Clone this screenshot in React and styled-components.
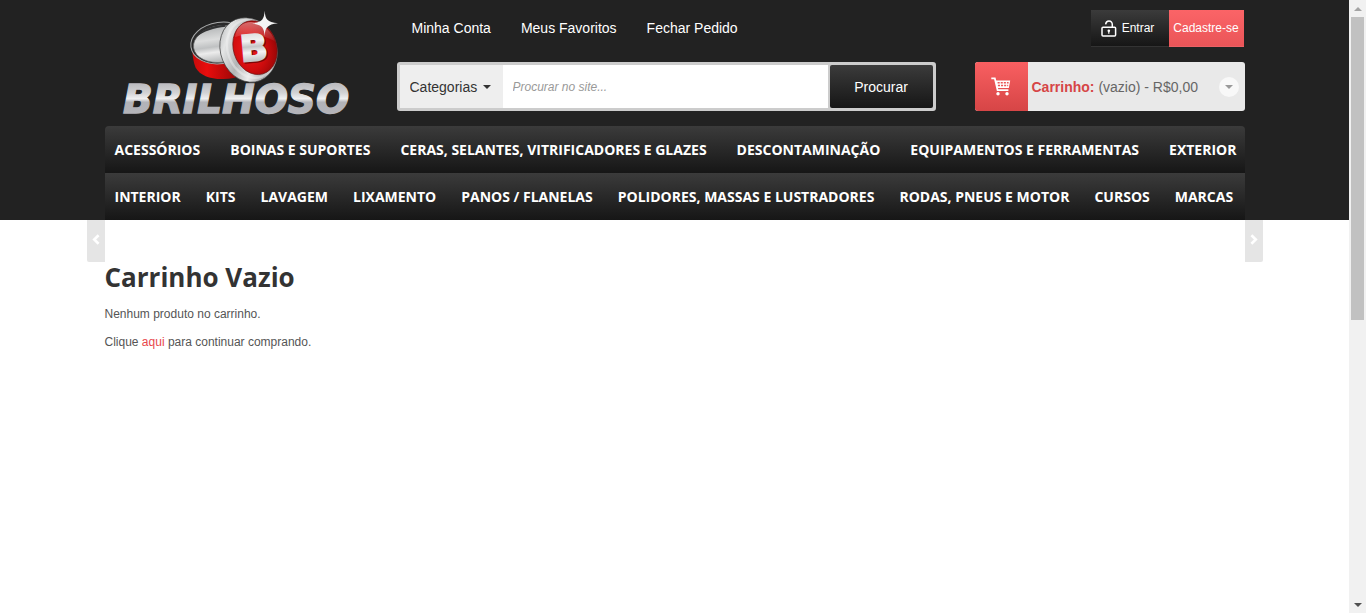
import React from "react";
import styled, { createGlobalStyle } from "styled-components";

const GlobalStyle = createGlobalStyle`
  *, *::before, *::after { box-sizing: border-box; }
  body {
    margin: 0;
    background: #fff;
    color: #555;
    font: 12px/18px "Liberation Sans", Arial, sans-serif;
  }
  a { text-decoration: none; }
  ul { list-style: none; margin: 0; padding: 0; }
`;

const headingFont = `"Open Sans", sans-serif`;
const darkGradient = "linear-gradient(#3b3b3b, #161616)";

const Screen = styled.div`
  display: flex;
  align-items: flex-start;
`;

const Page = styled.div`
  flex: 1;
  min-width: 0;
`;

const Container = styled.div`
  position: relative;
  max-width: 1140px;
  margin: 0 auto;
`;

const Header = styled.header`
  background: #222;
`;

const Masthead = styled.div`
  display: grid;
  grid-template-columns: 262px minmax(0, 1fr) 270px;
  column-gap: 30px;
  padding-top: 8px;
`;

const LogoLink = styled.a`
  display: block;
  height: 118px;
  svg { display: block; }
`;

const Middle = styled.div`
  display: flex;
  flex-direction: column;
  padding: 2px 9px 15px 0;
  justify-content: space-between;
`;

const TopLinks = styled.ul`
  display: flex;
  gap: 30px;
  padding: 0 15px;
  a {
    color: #fff;
    font-size: 14px;
    line-height: 36px;
  }
`;

const SearchForm = styled.form`
  display: flex;
  height: 49px;
  border: 3px solid #ccc;
  border-radius: 3px;
  background: #ccc;
`;

const CategoryField = styled.label`
  display: grid;
  align-items: center;
  width: 103px;
  background: #eee;
  > * { grid-area: 1 / 1; }
  svg {
    justify-self: end;
    margin-right: 12px;
    pointer-events: none;
  }
`;

const CategorySelect = styled.select`
  appearance: none;
  width: 100%;
  height: 100%;
  padding: 0 10px;
  border: 0;
  background: transparent;
  color: #333;
  font: 14px "Liberation Sans", Arial, sans-serif;
`;

const SearchInput = styled.input`
  flex: 1;
  min-width: 0;
  padding: 0 10px;
  border: 0;
  border-radius: 0;
  background: #fff;
  font: italic 12px "Liberation Sans", Arial, sans-serif;
  &::placeholder { color: #999; opacity: 1; }
`;

const SearchButton = styled.button`
  width: 103px;
  margin-left: 2px;
  padding: 0;
  border: 0;
  border-radius: 2px;
  background: ${darkGradient};
  color: #fff;
  font: 14px "Liberation Sans", Arial, sans-serif;
`;

const Account = styled.div`
  display: flex;
  flex-direction: column;
  align-items: stretch;
  justify-content: space-between;
  padding: 2px 0 15px;
`;

const AccountLinks = styled.div`
  display: flex;
  justify-content: flex-end;
  padding-right: 1px;
`;

const AccountLink = styled.a`
  display: flex;
  align-items: center;
  justify-content: center;
  gap: 5px;
  width: ${(p) => (p.$primary ? 75 : 78)}px;
  height: 37px;
  padding-right: ${(p) => (p.$primary ? 0 : 4)}px;
  border-bottom: 1px solid ${(p) => (p.$primary ? "#ec6165" : "#333")};
  background: ${(p) =>
    p.$primary ? "linear-gradient(#fb6467, #ea5558)" : darkGradient};
  color: #fff;
`;

const CartBar = styled.div`
  display: flex;
  align-items: center;
  height: 49px;
  border-radius: 3px;
  overflow: hidden;
  background: #e9e9e9;
  color: #666;
  font-size: 14px;
`;

const CartIconBox = styled.a`
  display: flex;
  align-items: center;
  justify-content: center;
  width: 53px;
  height: 100%;
  background: linear-gradient(#f95f61, #d64546);
`;

const CartText = styled.span`
  flex: 1;
  padding-left: 4px;
  strong { color: #d64546; }
`;

const CartToggle = styled.button`
  display: flex;
  align-items: center;
  justify-content: center;
  width: 20px;
  height: 20px;
  margin-right: 6px;
  padding: 0;
  border: 0;
  border-radius: 50%;
  background: #f8f8f8;
`;

const Nav = styled.nav`
  border-radius: 4px 4px 0 0;
  overflow: hidden;
`;

const NavRow = styled.ul`
  display: flex;
  gap: ${(p) => p.$gap}px;
  height: 47px;
  padding: 0 10px;
  background: ${darkGradient};
  a {
    color: #fff;
    font: 700 14px/47px ${headingFont};
    white-space: nowrap;
  }
`;

const SideArrow = styled.button`
  position: absolute;
  top: 0;
  ${(p) => (p.$side === "left" ? "right: 100%;" : "left: 100%;")}
  display: flex;
  align-items: center;
  justify-content: center;
  width: 18px;
  height: 42px;
  padding: 0 0 3px;
  border: 0;
  border-radius: ${(p) => (p.$side === "left" ? "0 0 0 2px" : "0 0 2px 0")};
  background: #e5e5e5;
`;

const Content = styled.main`
  padding: 40px 0;
  p { margin: 0 0 10px; }
  a { color: #e8474b; }
`;

const Title = styled.h1`
  margin: 0 0 10px;
  color: #333;
  font: 700 26px/35px ${headingFont};
`;

const Scrollbar = styled.div`
  position: sticky;
  top: 0;
  display: flex;
  flex-direction: column;
  width: 17px;
  height: 100vh;
  padding: 0 2px;
  background: #f1f1f1;
`;

const ScrollEnd = styled.div`
  display: flex;
  align-items: center;
  justify-content: center;
  height: 17px;
`;

const ScrollPart = styled.div`
  flex: ${(p) => p.$share} 0 0;
  background: ${(p) => (p.$thumb ? "#c1c1c1" : "transparent")};
`;

const Caret = ({ width = 8, height = 4, color = "#333", up }) => (
  <svg width={width} height={height} viewBox="0 0 8 4" aria-hidden="true">
    <path d={up ? "M0 4L4 0L8 4Z" : "M0 0H8L4 4Z"} fill={color} />
  </svg>
);

const Chevron = ({ side }) => (
  <svg width="8" height="11" viewBox="0 0 8 11" aria-hidden="true">
    <path
      d={side === "left" ? "M6.6 1.2L2.2 5.5L6.6 9.8" : "M1.4 1.2L5.8 5.5L1.4 9.8"}
      fill="none"
      stroke="#fff"
      strokeWidth="2.6"
    />
  </svg>
);

const LockIcon = () => (
  <svg width="16" height="17" viewBox="0 0 16 17" fill="none" stroke="#fff" aria-hidden="true">
    <rect x="1" y="7.2" width="13.6" height="8.8" rx="1" strokeWidth="1.5" />
    <path d="M4.6 4.4C4.9 2.2 6.1 1 7.9 1C10 1 11.3 2.4 11.3 4.6V7" strokeWidth="1.5" />
    <circle cx="7.8" cy="10.8" r="1.3" fill="#fff" stroke="none" />
    <path d="M7.8 11V13.8" strokeWidth="1.2" />
  </svg>
);

const CartIcon = () => (
  <svg width="20" height="19" viewBox="0 0 20 19" fill="none" stroke="#fff" aria-hidden="true">
    <path d="M0.3 1.4H3.8L6.6 13.2H17.4" strokeWidth="1.8" />
    <path d="M4.4 3.4H19.2L17.8 11H6.2Z" fill="#fff" stroke="none" />
    <path d="M6.6 5.7H17.6M6.9 8.5H17.2" stroke="#ea5759" strokeWidth="1.5" strokeDasharray="2.1 1" />
    <circle cx="7" cy="16.7" r="1.7" fill="#fff" stroke="none" />
    <circle cx="16" cy="16.7" r="1.7" fill="#fff" stroke="none" />
  </svg>
);

const Logo = () => (
  <svg width="262" height="118" viewBox="30 24 786 354" role="img" aria-label="Brilhoso">
    <defs>
      <linearGradient id="word" gradientUnits="userSpaceOnUse" x1="0" y1="252" x2="0" y2="340">
        <stop offset="0" stopColor="#bcbcc0" />
        <stop offset="0.3" stopColor="#d2d2d4" />
        <stop offset="0.5" stopColor="#f0f0f1" />
        <stop offset="0.62" stopColor="#b2b3b8" />
        <stop offset="1" stopColor="#b4b4b9" />
      </linearGradient>
      <linearGradient id="inside" x1="0" y1="0" x2="0" y2="1">
        <stop offset="0" stopColor="#b4b6b7" />
        <stop offset="0.35" stopColor="#dcdddd" />
        <stop offset="0.55" stopColor="#bfc1c2" />
        <stop offset="0.7" stopColor="#ececec" />
        <stop offset="1" stopColor="#b0b2b3" />
      </linearGradient>
      <linearGradient id="letter" gradientUnits="userSpaceOnUse" x1="0" y1="100" x2="0" y2="186">
        <stop offset="0" stopColor="#dcdddd" />
        <stop offset="0.3" stopColor="#f2f2f2" />
        <stop offset="0.5" stopColor="#c4c6c7" />
        <stop offset="0.7" stopColor="#f4f4f4" />
        <stop offset="1" stopColor="#c2c4c5" />
      </linearGradient>
      <linearGradient id="rim" x1="0" y1="0" x2="1" y2="1">
        <stop offset="0" stopColor="#9b9d9e" />
        <stop offset="0.22" stopColor="#e4e5e5" />
        <stop offset="0.42" stopColor="#b2b4b5" />
        <stop offset="0.6" stopColor="#ececec" />
        <stop offset="0.78" stopColor="#a5a7a8" />
        <stop offset="1" stopColor="#dadbdb" />
      </linearGradient>
      <linearGradient id="tin" x1="0" y1="0" x2="1" y2="0">
        <stop offset="0" stopColor="#c80b0b" />
        <stop offset="0.3" stopColor="#e90d0d" />
        <stop offset="1" stopColor="#8d0505" />
      </linearGradient>
      <radialGradient id="lid" cx="0.35" cy="0.5" r="0.7">
        <stop offset="0" stopColor="#ef1b1c" />
        <stop offset="0.55" stopColor="#cf0c0d" />
        <stop offset="1" stopColor="#8f0505" />
      </radialGradient>
      <linearGradient id="shine" x1="0" y1="0" x2="0" y2="1">
        <stop offset="0" stopColor="#fff" stopOpacity="0.4" />
        <stop offset="1" stopColor="#fff" stopOpacity="0.05" />
      </linearGradient>
    </defs>

    <path d="M292 148C293 176 298 194 302 203C315 226 346 238 385 237C408 237 425 233 440 226L400 145Z" fill="url(#tin)" />
    <ellipse cx="376" cy="129" rx="89" ry="62" transform="rotate(-8 376 129)" fill="#2a2a2a" stroke="#a9abac" strokeWidth="3" />
    <ellipse cx="378" cy="132" rx="83" ry="55" transform="rotate(-8 378 132)" fill="url(#inside)" stroke="#6c6e6f" strokeWidth="2" />
    <path d="M302 113C320 88 350 77 390 74L392 80C356 84 326 92 302 113Z" fill="#303132" />

    <ellipse cx="459" cy="150" rx="82" ry="99" transform="rotate(-22 459 150)" fill="url(#rim)" stroke="#3b3b3b" strokeWidth="2" />
    <ellipse cx="470" cy="146" rx="72" ry="89" transform="rotate(-20 470 146)" fill="none" stroke="#f1f1f1" strokeWidth="7" opacity="0.45" />
    <ellipse cx="480" cy="143" rx="65" ry="82" transform="rotate(-17 480 143)" fill="url(#lid)" stroke="#6c1414" strokeWidth="2" />
    <path d="M420 112C424 80 444 66 468 66C500 66 530 92 540 124C508 105 460 96 420 112Z" fill="url(#shine)" />

    <text x="442" y="188" transform="rotate(-5 442 188)" fontFamily="DejaVu Sans" fontWeight="700" fontSize="108" fill="#7d0506" stroke="#7d0506" strokeWidth="7">B</text>
    <text x="439" y="185" transform="rotate(-5 439 185)" fontFamily="DejaVu Sans" fontWeight="700" fontSize="108" fill="url(#letter)" stroke="url(#letter)" strokeWidth="6">B</text>

    <path d="M509 32C511 58 516 66 549 70C516 74 511 83 509 108C507 83 502 74 471 70C502 66 507 58 509 32Z" fill="#f4f4f4" />

    <text x="423" y="338" textAnchor="middle" fontFamily="DejaVu Sans" fontWeight="700" fontStyle="italic" fontSize="117" fill="url(#word)" stroke="url(#word)" strokeWidth="4">BRILHOSO</text>
  </svg>
);

const topLinks = ["Minha Conta", "Meus Favoritos", "Fechar Pedido"];

const menu = [
  {
    gap: 30,
    items: [
      "ACESSÓRIOS",
      "BOINAS E SUPORTES",
      "CERAS, SELANTES, VITRIFICADORES E GLAZES",
      "DESCONTAMINAÇÃO",
      "EQUIPAMENTOS E FERRAMENTAS",
      "EXTERIOR",
    ],
  },
  {
    gap: 25,
    items: [
      "INTERIOR",
      "KITS",
      "LAVAGEM",
      "LIXAMENTO",
      "PANOS / FLANELAS",
      "POLIDORES, MASSAS E LUSTRADORES",
      "RODAS, PNEUS E MOTOR",
      "CURSOS",
      "MARCAS",
    ],
  },
];

export default function App() {
  return (
    <Screen>
      <GlobalStyle />
      <Page>
        <Header>
          <Container>
            <Masthead>
              <LogoLink href="#">
                <Logo />
              </LogoLink>
              <Middle>
                <TopLinks>
                  {topLinks.map((label) => (
                    <li key={label}>
                      <a href="#">{label}</a>
                    </li>
                  ))}
                </TopLinks>
                <SearchForm onSubmit={(e) => e.preventDefault()}>
                  <CategoryField>
                    <CategorySelect aria-label="Categorias">
                      <option>Categorias</option>
                    </CategorySelect>
                    <Caret />
                  </CategoryField>
                  <SearchInput
                    type="text"
                    placeholder="Procurar no site..."
                    aria-label="Procurar no site"
                  />
                  <SearchButton type="submit">Procurar</SearchButton>
                </SearchForm>
              </Middle>
              <Account>
                <AccountLinks>
                  <AccountLink href="#">
                    <LockIcon />
                    Entrar
                  </AccountLink>
                  <AccountLink href="#" $primary>
                    Cadastre-se
                  </AccountLink>
                </AccountLinks>
                <CartBar>
                  <CartIconBox href="#" aria-label="Carrinho">
                    <CartIcon />
                  </CartIconBox>
                  <CartText>
                    <strong>Carrinho:</strong> (vazio) - R$0,00
                  </CartText>
                  <CartToggle type="button" aria-label="Abrir carrinho">
                    <Caret color="#999" />
                  </CartToggle>
                </CartBar>
              </Account>
            </Masthead>
            <Nav>
              {menu.map((row) => (
                <NavRow key={row.gap} $gap={row.gap}>
                  {row.items.map((label) => (
                    <li key={label}>
                      <a href="#">{label}</a>
                    </li>
                  ))}
                </NavRow>
              ))}
            </Nav>
          </Container>
        </Header>
        <Container>
          <SideArrow type="button" $side="left" aria-label="Anterior">
            <Chevron side="left" />
          </SideArrow>
          <SideArrow type="button" $side="right" aria-label="Próximo">
            <Chevron side="right" />
          </SideArrow>
          <Content>
            <Title>Carrinho Vazio</Title>
            <p>Nenhum produto no carrinho.</p>
            <p>
              Clique <a href="#">aqui</a> para continuar comprando.
            </p>
          </Content>
        </Container>
      </Page>
      <Scrollbar aria-hidden="true">
        <ScrollEnd>
          <Caret up color="#a3a3a3" />
        </ScrollEnd>
        <ScrollPart $share={303} $thumb />
        <ScrollPart $share={276} />
        <ScrollEnd>
          <Caret color="#505050" />
        </ScrollEnd>
      </Scrollbar>
    </Screen>
  );
}
